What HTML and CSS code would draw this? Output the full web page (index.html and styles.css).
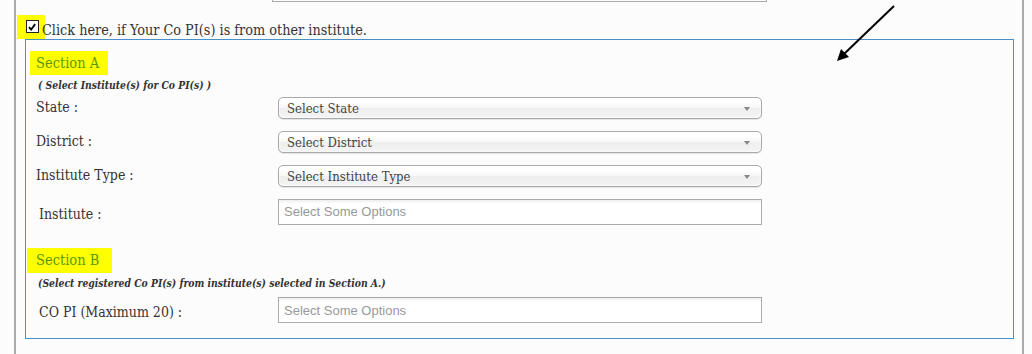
FILE: index.html
```html
<!DOCTYPE html>
<html lang="en">
<head>
<meta charset="utf-8">
<title>Co PI selection</title>
<link rel="stylesheet" href="styles.css">
</head>
<body>
<div class="page">
  <div class="prev-row"><div class="prev-box"></div></div>

  <label class="check-row">
    <span class="hl-check"><span class="checkbox"><svg viewBox="0 0 12 12" width="12" height="12"><path d="M2.3 6.2 L5 9 L9.8 2.6" fill="none" stroke="#000" stroke-width="2.2"/></svg></span></span>
    <span class="check-text">Click here, if Your Co PI(s) is from other institute.</span>
  </label>

  <div class="arrow">
    <svg width="70" height="70" viewBox="0 0 70 70"><line x1="64" y1="6" x2="14" y2="54" stroke="#000" stroke-width="2"/><polygon points="7,61 11,49 19,57" fill="#000"/></svg>
  </div>

  <div class="fieldset">
    <div class="section-a">
      <span class="hl">Section A</span>
    </div>
    <p class="note">( Select Institute(s) for Co PI(s) )</p>
    <div class="grid">
      <div class="label">State :</div>
      <div class="select"><span>Select State</span><i class="caret"></i></div>
      <div class="label">District :</div>
      <div class="select"><span>Select District</span><i class="caret"></i></div>
      <div class="label">Institute Type :</div>
      <div class="select"><span>Select Institute Type</span><i class="caret"></i></div>
      <div class="label label-in">Institute :</div>
      <div class="multi multi-a">Select Some Options</div>
    </div>

    <div class="section-b">
      <span class="hl hl-b">Section B</span>
    </div>
    <p class="note">(Select registered Co PI(s) from institute(s) selected in Section A.)</p>
    <div class="grid grid-b">
      <div class="label label-in">CO PI (Maximum 20) :</div>
      <div class="multi">Select Some Options</div>
    </div>
  </div>
</div>
</body>
</html>
```
FILE: styles.css
```css
html, body {
  margin: 0;
  padding: 0;
  background: #fcfcfc;
}
body {
  font-family: "DejaVu Serif", "Liberation Serif", serif;
  font-stretch: condensed;
  color: #333;
  width: 1032px;
  height: 354px;
  overflow: hidden;
}
.page {
  position: relative;
  margin-left: 14px;
  width: 1010px;
  height: 354px;
  border-left: 2px solid #aaa;
  border-right: 2px solid #aaa;
  box-sizing: border-box;
}
.prev-row {
  height: 2px;
  padding-left: 256px;
}
.prev-box {
  width: 493px;
  height: 1px;
  border: 1px solid #aaa;
  border-top: 0;
}
.check-row {
  display: flex;
  align-items: center;
  margin-top: 13px;
  margin-left: 1px;
  height: 24px;
}
.hl-check {
  width: 28px;
  height: 24px;
  background: #ffff00;
  display: flex;
  align-items: center;
  justify-content: center;
  padding-left: 2px;
  padding-bottom: 1px;
  box-sizing: border-box;
}
.checkbox {
  width: 11px;
  height: 11px;
  border: 1px solid #222;
  background: #fff;
  display: flex;
  align-items: center;
  justify-content: center;
}
.checkbox svg { width: 10px; height: 10px; }
.check-text {
  margin-left: -3px;
  margin-top: 5px;
  font-size: 14.3px;
  color: #333;
  white-space: nowrap;
}
.arrow {
  position: absolute;
  left: 814px;
  top: 0;
}
.fieldset {
  margin-left: 9px;
  width: 989px;
  height: 300px;
  border: 1px solid #4a8fc8;
  box-sizing: border-box;
  padding: 11px 0 0 4px;
}
.section-a, .section-b {
  height: 24px;
}
.hl {
  display: inline-block;
  background: #ffff00;
  color: #5a9a0a;
  font-size: 14.5px;
  height: 24px;
  line-height: 24px;
  padding: 0 6px;
  width: 78px;
  box-sizing: border-box;
  white-space: nowrap;
  overflow: hidden;
}
.section-b {
  margin-top: 23px;
  margin-left: -3px;
  height: 25px;
}
.hl-b {
  width: 85px;
  padding-left: 9px;
  height: 25px;
  line-height: 25px;
}
.note {
  margin: 3px 0 0 8px;
  font-size: 10.3px;
  font-weight: bold;
  font-style: italic;
  color: #333;
  height: 14px;
  line-height: 14px;
  white-space: nowrap;
}
.grid {
  display: grid;
  grid-template-columns: 242px 484px;
  grid-template-rows: 22px 22px 22px 26px;
  row-gap: 12px;
  margin-top: 5px;
  margin-left: 6px;
  align-items: center;
}
.grid-b {
  grid-template-rows: 26px;
  margin-top: 7px;
}
.label {
  font-size: 14px;
  color: #333;
  margin-top: -3px;
  white-space: nowrap;
}
.label-in {
  padding-left: 3px;
  margin-top: 4px;
}
.select {
  position: relative;
  height: 22px;
  border: 1px solid #aaa;
  border-radius: 5px;
  box-sizing: border-box;
  background: linear-gradient(#fff 20%, #f6f6f6 50%, #eee 52%, #f4f4f4 100%);
  box-shadow: inset 0 0 3px #fff, 0 1px 1px rgba(0,0,0,0.1);
  display: flex;
  align-items: center;
  padding-left: 8px;
  font-size: 13px;
  color: #444;
  white-space: nowrap;
}
.caret {
  position: absolute;
  right: 11px;
  top: 9px;
  width: 0;
  height: 0;
  border-left: 3px solid transparent;
  border-right: 3px solid transparent;
  border-top: 4px solid #888;
}
.multi {
  height: 26px;
  border: 1px solid #aaa;
  box-sizing: border-box;
  background: linear-gradient(#eee 1%, #fff 15%);
  font-family: "Liberation Sans", Arial, sans-serif;
  font-stretch: normal;
  font-size: 13px;
  color: #999;
  display: flex;
  align-items: center;
  padding-left: 5px;
}
.multi-a {
  margin-top: -1px;
}
```
